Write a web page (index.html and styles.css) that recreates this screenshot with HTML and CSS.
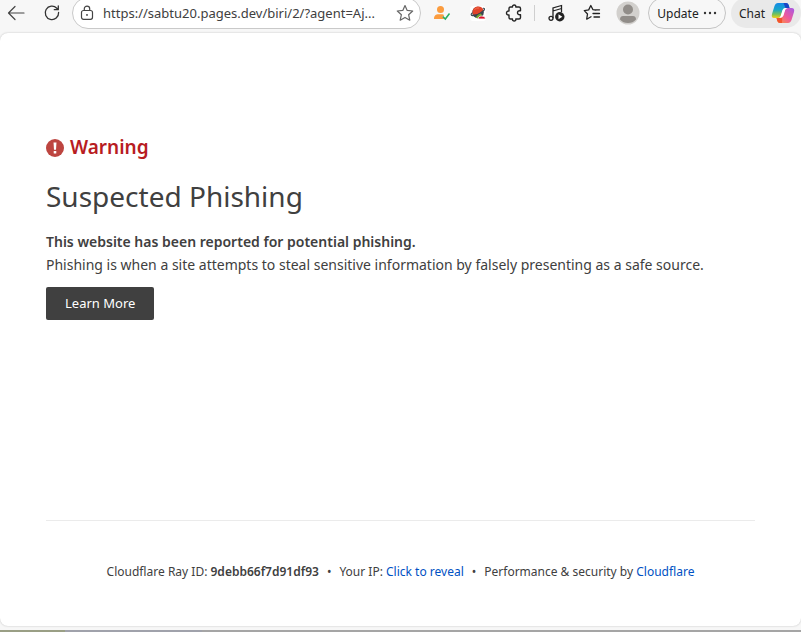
FILE: index.html
```html
<!DOCTYPE html>
<html lang="en">
<head>
  <meta charset="UTF-8">
  <meta name="viewport" content="width=device-width, initial-scale=1.0">
  <title>Suspected Phishing</title>
  <link rel="stylesheet" href="styles.css">
</head>
<body>
  <header class="toolbar">
    <button class="tool" type="button" aria-label="Back">
      <svg width="18" height="18" viewBox="0 0 18 18" fill="none" stroke="#444" stroke-width="1.2" stroke-linecap="round" stroke-linejoin="round"><path d="M17 9H1.5M8 2.5L1.5 9L8 15.500"/></svg>
    </button>
    <button class="tool" type="button" aria-label="Refresh">
      <svg width="18" height="18" viewBox="0 0 18 18" fill="none" stroke="#333" stroke-width="1.3" stroke-linecap="round" stroke-linejoin="round"><path d="M15.600 8.500A6.700 6.700 0 1 1 13.800 4.300L15 5.600M15.300 1.800V5.700H11.300"/></svg>
    </button>
    <div class="address">
      <button class="lock" type="button" aria-label="Site information">
        <svg width="14" height="16" viewBox="0 0 14 16" fill="none" stroke="#444" stroke-width="1.2"><rect x="1.500" y="5.500" width="11" height="8.800" rx="2"/><path d="M4.300 5.500V3.800a2.700 2.700 0 0 1 5.400 0V5.500"/><circle cx="7" cy="9.900" r=".9" fill="#333" stroke="none"/></svg>
      </button>
      <input class="url" type="text" aria-label="Address" value="https://sabtu20.pages.dev/biri/2/?agent=Aj...">
      <button class="star" type="button" aria-label="Add to favorites">
        <svg width="18" height="18" viewBox="0 0 18 18" fill="none" stroke="#666" stroke-width="1.2" stroke-linejoin="round"><path d="M9 1.500L11.200 6.400L16.700 7L12.600 10.700L13.800 16.200L9 13.400L4.200 16.200L5.400 10.700L1.300 7L6.800 6.400Z"/></svg>
      </button>
    </div>
    <button class="tool" type="button" aria-label="Account checker">
      <svg width="18" height="18" viewBox="0 0 18 18"><circle cx="7.500" cy="5.500" r="3.500" fill="#fb9c3f"/><path d="M1 15c0-3.500 2-4.800 4.500-4.800h3c1.200 0 2 .3 2.700 1L9.500 12.800L11.500 15Z" fill="#fb9c3f"/><path d="M9.800 12.500L12.300 15L16.500 9.500" fill="none" stroke="#27ae60" stroke-width="1.500"/></svg>
    </button>
    <button class="tool" type="button" aria-label="Planet extension">
      <svg width="18" height="18" viewBox="0 0 18 18"><rect x="1" y="2" width="16" height="15" rx="3" fill="#fff"/><circle cx="9" cy="8.500" r="5.800" fill="#3b4650"/><path d="M3.800 10.500C2.500 5 6 2.500 9.300 2.500C12 2.500 13.800 4 14.300 6C12 9 8 11 3.800 10.500Z" fill="#e2432a"/><path d="M5.500 5.500Q7.500 3.500 10 4" fill="none" stroke="#f3704e"/><path d="M14 4.300C16.200 4 15.800 5.800 14 7.200C11 9.800 6.500 11.700 3.500 11.600C1.500 11.400 2 9.800 3.200 9" fill="none" stroke="#3b4650" stroke-width="1.100"/><path d="M6.500 13.700Q8.500 10.500 11.500 9.500L13 11L9 14.500Z" fill="#79a52f"/><path d="M9 15C9 11 16.500 11 16.500 15Z" fill="#d8132b" stroke="#fff" stroke-width=".8"/></svg>
    </button>
    <button class="tool" type="button" aria-label="Extensions">
      <svg width="18" height="18" viewBox="0 0 18 18" fill="none" stroke="#252525" stroke-width="1.400" stroke-linejoin="round"><path d="M5.500 3H7.500C7.300 1.500 8.300 1 9.300 1S11 1.500 10.800 3H14Q15.500 3 15.500 4.500V6.800C13.300 6.400 12.500 7.400 12.500 8.700S13.300 11 15.500 10.600V13.500Q15.500 15 14 15H10.800C11 16.500 10.200 17 9.200 17S7.300 16.500 7.500 15H5.500Q4 15 4 13.500V11C2.200 11.300 1.500 10.200 1.500 9S2.300 6.800 4 7V4.500Q4 3 5.500 3Z"/></svg>
    </button>
    <span class="divider"></span>
    <button class="tool" type="button" aria-label="Media controls">
      <svg width="18" height="18" viewBox="0 0 18 18" fill="none" stroke="#222" stroke-width="1.300"><circle cx="4" cy="14.300" r="2"/><path d="M6 14.300V4L14.500 1.500V8M6 7L14.500 4.500"/><circle cx="12.800" cy="12.800" r="4.700" fill="#222" stroke="none"/><path d="M11.500 10.300V15.300L15.300 12.800Z" fill="#fff" stroke="none"/></svg>
    </button>
    <button class="tool" type="button" aria-label="Favorites">
      <svg width="18" height="18" viewBox="0 0 18 18" fill="none" stroke="#222" stroke-width="1.300" stroke-linecap="round" stroke-linejoin="round"><path d="M12.800 6.200L10 5.700L7.800 1.500L5.700 5.900L1.300 6.600L4.500 10L3.700 15.200L8 12.800M11.500 5.800H16.500M10 9.500H16.500M11 13H16.500"/></svg>
    </button>
    <button class="tool" type="button" aria-label="Profile">
      <svg width="24" height="24" viewBox="0 0 24 24"><circle cx="12" cy="12" r="11.500" fill="#d2d0cd"/><circle cx="12" cy="8.500" r="5" fill="#918d89"/><path d="M4 18.500Q4 15 7 15H17Q20 15 20 18.500Q17 22 12 22T4 18.500Z" fill="#918d89"/></svg>
    </button>
    <button class="update" type="button">Update
      <svg width="14" height="4" viewBox="0 0 14 4" fill="#333"><circle cx="2" cy="2" r="1.200"/><circle cx="7" cy="2" r="1.200"/><circle cx="12" cy="2" r="1.200"/></svg>
    </button>
    <button class="chat" type="button">Chat
      <svg width="24" height="22" viewBox="0 0 24 22">
        <defs>
          <linearGradient id="cool" x1="0" y1="0" x2="0" y2="1"><stop offset="0" stop-color="#1489e8"/><stop offset=".45" stop-color="#19a6c8"/><stop offset=".75" stop-color="#78c259"/><stop offset="1" stop-color="#f5cf18"/></linearGradient>
          <linearGradient id="warm" x1="1" y1="0" x2="0" y2="1"><stop offset="0" stop-color="#a458e8"/><stop offset=".5" stop-color="#ee5a9b"/><stop offset="1" stop-color="#ff9b35"/></linearGradient>
        </defs>
        <path d="M7 1H15Q17 1 17.700 3L18.500 6H15Q12.500 6 11.700 8.500L9.800 14Q9 16 7 16H3Q0 16 1 12L3.500 4Q4.500 1 7 1Z" fill="url(#cool)"/>
        <path d="M12.500 1H15Q17 1 17.700 3L18.500 6H14.500Z" fill="#1b44c4"/>
        <path d="M17 6H20.500Q24 6 23 10L20.500 18Q19.500 21 17 21H9Q7 21 6.300 19L5.500 16H7.500Q11 16 12 13L13.700 8Q14.400 6 17 6Z" fill="url(#warm)"/>
        <path d="M5.500 16H8Q10 16 11.300 14.500L11 21H9Q7 21 6.300 19Z" fill="#f2542d"/>
        <path d="M11.500 8Q12.300 6 14.500 6H16.500Q14.800 6.500 14.200 8L12.500 13.500Q11.600 16 8.200 16Q9.200 15.500 9.700 14Z" fill="#fff"/>
      </svg>
    </button>
  </header>

  <main class="page">
    <section class="content">
      <h2 class="warning">
        <svg width="18" height="18" viewBox="0 0 18 18"><circle cx="9" cy="9" r="9" fill="#bd4540"/><path d="M7.500 3.500H10.500L10 10.800H8Z" fill="#fff"/><rect x="7.700" y="12" width="2.600" height="2.500" rx=".5" fill="#fff"/></svg>
        Warning
      </h2>
      <h1 class="title">Suspected Phishing</h1>
      <p class="text"><strong>This website has been reported for potential phishing.</strong></p>
      <p class="text">Phishing is when a site attempts to steal sensitive information by falsely presenting as a safe source.</p>
      <a class="learn-more" href="#">Learn More</a>
    </section>
    <footer class="footer">
      <span>Cloudflare Ray ID: <strong>9debb66f7d91df93</strong></span>
      <span>•</span>
      <span>Your IP: <a href="#">Click to reveal</a></span>
      <span>•</span>
      <span>Performance &amp; security by <a href="#">Cloudflare</a></span>
    </footer>
  </main>
  <div class="taskbar"></div>
</body>
</html>
```
FILE: styles.css
```css
* {
  box-sizing: border-box;
}
body {
  margin: 0;
  min-height: 100vh;
  display: flex;
  flex-direction: column;
  background-color: #f7f7f7;
  color: #404040;
  font-family: "Noto Sans", "Open Sans", sans-serif;
}
button {
  padding: 0;
  border: none;
  background: none;
  color: #222;
  font-family: inherit;
  font-size: 12px;
  cursor: pointer;
}
svg {
  flex: none;
}
a {
  color: #0051c3;
  text-decoration: none;
}
strong {
  font-weight: 600;
}

/* Browser toolbar */
.toolbar {
  display: flex;
  align-items: center;
  gap: 5px;
  height: 33px;
  padding-bottom: 7px;
  overflow: hidden;
}
.tool {
  flex: none;
  display: flex;
  align-items: center;
  justify-content: center;
  width: 31px;
  height: 30px;
}
.address {
  flex: 1;
  min-width: 0;
  display: flex;
  align-items: center;
  gap: 9px;
  height: 32px;
  padding: 0 6px 0 7px;
  background-color: #fff;
  border: 1px solid #c9c9c9;
  border-radius: 16px;
}
.lock, .star {
  flex: none;
  display: flex;
}
.url {
  flex: 1;
  min-width: 0;
  padding: 0;
  border: none;
  outline: none;
  background: none;
  color: #404040;
  font-family: inherit;
  font-size: 13px;
}
.divider {
  width: 1px;
  height: 16px;
  background-color: #cfcfcf;
}
.update, .chat {
  flex: none;
  display: flex;
  align-items: center;
  justify-content: center;
  height: 32px;
  border-radius: 16px;
}
.update {
  gap: 4px;
  width: 78px;
  border: 1px solid #c4c4c4;
}
.chat {
  gap: 6px;
  width: 70px;
  height: 30px;
  padding-left: 2px;
  background-color: #e9e9e9;
}

/* Warning page */
.page {
  flex: 1;
  display: flex;
  flex-direction: column;
  padding: 100px 46px 0;
  margin-bottom: 4px;
  background-color: #fff;
  border-radius: 8px;
  box-shadow: 0 0 2px #bbb;
}
.content {
  flex: 1;
}
.warning {
  display: flex;
  align-items: center;
  gap: 6px;
  margin: 0;
  color: #b81c22;
  font-size: 19px;
  font-weight: 600;
  line-height: 29px;
}
.title {
  margin: 12px 0;
  font-size: 28px;
  font-weight: 400;
  line-height: 44px;
}
.text {
  margin: 0;
  font-size: 14px;
  line-height: 23px;
}
.learn-more {
  display: inline-block;
  margin-top: 11px;
  padding: 0 19px;
  border-radius: 2px;
  background-color: #404040;
  color: #fff;
  font-size: 13px;
  line-height: 33px;
}
.footer {
  display: flex;
  flex-wrap: wrap;
  justify-content: center;
  gap: 0 8px;
  padding: 40px 0 43px;
  border-top: 1px solid #ebebeb;
  font-size: 12px;
  line-height: 22px;
}
.taskbar {
  height: 2px;
  background: linear-gradient(to right, #9a9f85 0 65px, #a0a2ab 65px 202px, #a5a5a5 202px);
}
```
